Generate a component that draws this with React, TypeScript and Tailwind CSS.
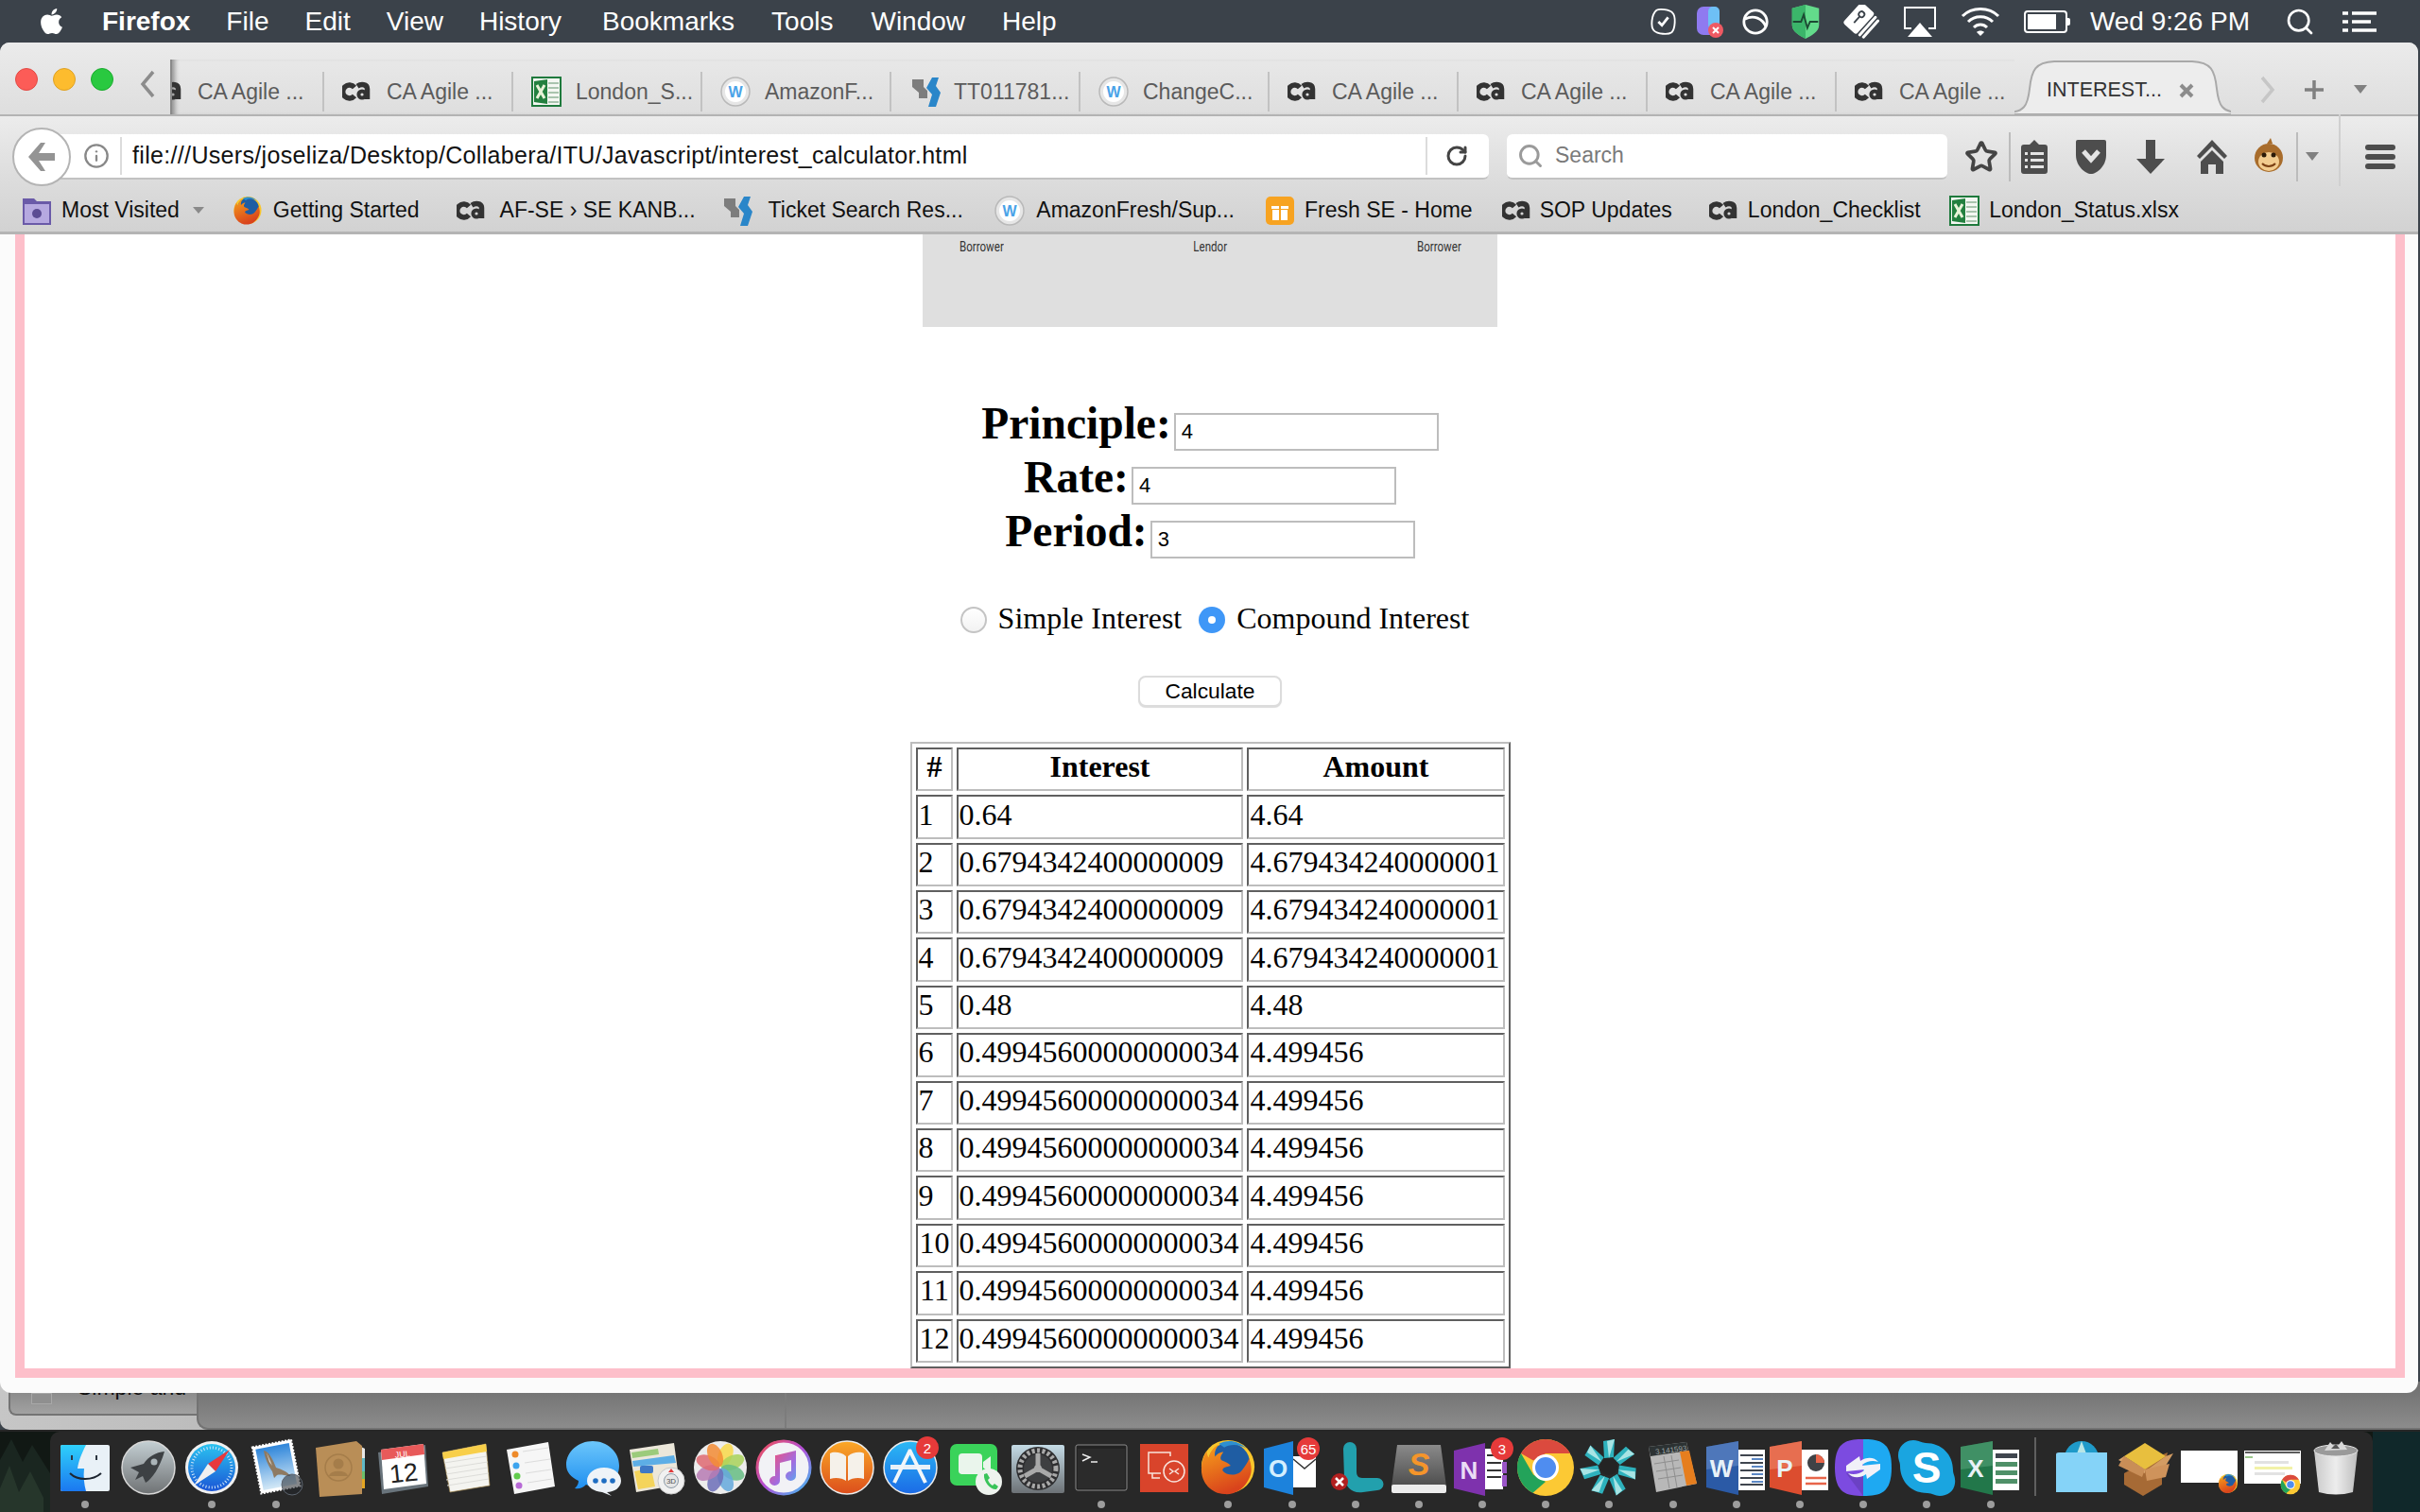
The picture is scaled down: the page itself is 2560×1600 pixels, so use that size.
import { Info, RotateCw, Search, Star } from "lucide-react";
import { FaApple } from "react-icons/fa";

const SERIF = "font-['Liberation_Serif',serif]";

function CaLogo({ className = "" }: { className?: string }) {
  return (
    <svg viewBox="0 0 30 22" className={`w-[30px] h-[22px] ${className}`} fill="none" stroke="#333" strokeWidth="5.5">
      <path d="M13 6.5A7 7 0 1 0 13 15.5" />
      <path d="M16 5.2C20 2.6 26.5 3 26.5 8V19" />
      <circle cx="21" cy="14" r="3.6" strokeWidth="4" />
    </svg>
  );
}

function XlsIcon({ className = "" }: { className?: string }) {
  return (
    <svg viewBox="0 0 32 32" className={`w-[32px] h-[32px] ${className}`}>
      <rect x="1" y="1" width="30" height="30" fill="#f4f7f2" stroke="#1f7a3d" strokeWidth="2" />
      <path d="M18 7h11M18 12h11M18 17h11M18 22h11M18 27h11" stroke="#a9c4ae" strokeWidth="2" />
      <path d="M3 5L17 3V29L3 27Z" fill="#23803f" />
      <path d="M6 9L14 23M14 9L6 23" stroke="#e8f3d8" strokeWidth="3" />
    </svg>
  );
}

function WikiIcon({ className = "" }: { className?: string }) {
  return (
    <svg viewBox="0 0 32 32" className={`w-[32px] h-[32px] ${className}`}>
      <circle cx="16" cy="16" r="15" fill="#e6e6e6" stroke="#b9b9b9" strokeWidth="1.5" />
      <circle cx="16" cy="16" r="11" fill="#fff" />
      <text x="16" y="22" textAnchor="middle" fontFamily="Liberation Sans" fontWeight="700" fontSize="16" fill="#4aa3e8">W</text>
    </svg>
  );
}

function JiraIcon({ className = "" }: { className?: string }) {
  return (
    <svg viewBox="0 0 34 34" className={`w-[34px] h-[34px] ${className}`}>
      <path d="M3 4H15V12L19 16V24H10V18L3 12Z" fill="#7d7d7d" />
      <path d="M24 2L31 2L28 11L33 18L28 33H20L24 20L18 13Z" fill="#2a86c9" />
    </svg>
  );
}

function FoxIcon({ size = 32 }: { size?: number }) {
  return (
    <svg viewBox="0 0 64 64" width={size} height={size} className="overflow-visible">
      <defs>
        <linearGradient id={`fox-o-${size}`} x1="0" y1="0" x2="0.4" y2="1">
          <stop offset="0" stopColor="#f7a21b" />
          <stop offset="1" stopColor="#d9431c" />
        </linearGradient>
      </defs>
      <circle cx="32" cy="31" r="29" fill="#f9c62b" />
      <circle cx="33" cy="28" r="23" fill="#1f5da3" />
      <path d="M22 6C30 1 44 2 52 11C44 6 34 6 28 10Z" fill="#2d8fd0" />
      <path
        d="M22 7C18 12 17 16 18 20C21 16 25 15 27 15C24 19 23 22 25 24C29 26 33 27 35 30C30 32 27 31 26 35C30 41 43 42 48 34C51 30 54 26 55 22C58 30 59 38 54 46C48 57 38 62 28 61C14 60 3 49 3 34C3 26 6 18 9 14C9 18 10 20 11 21C13 14 17 9 22 7Z"
        fill={`url(#fox-o-${size})`}
      />
    </svg>
  );
}

function ChromeIcon({ size = 64 }: { size?: number }) {
  return (
    <svg viewBox="0 0 64 64" width={size} height={size}>
      <circle cx="32" cy="32" r="30" fill="#fcc934" />
      <path d="M32 2A30 30 0 0 1 58 17H32L19 24.5L6 17A30 30 0 0 1 32 2Z" fill="#db4a3e" />
      <path d="M6 17L19 39.5L32 47L18.5 58.8A30 30 0 0 1 6 17Z" fill="#23a35a" />
      <circle cx="32" cy="32" r="14" fill="#fff" />
      <circle cx="32" cy="32" r="11" fill="#4f8df0" />
    </svg>
  );
}

function Badge({ x, y, label, r = 12 }: { x: number; y: number; label: string; r?: number }) {
  return (
    <g>
      <circle cx={x} cy={y} r={r} fill="#e63a3a" />
      <text x={x} y={y + 5.5} textAnchor="middle" fontFamily="Liberation Sans" fontSize="15" fill="#fff">
        {label}
      </text>
    </g>
  );
}

function OfficeIcon({ color, light, letter, kind }: { color: string; light: string; letter: string; kind: "w" | "p" | "x" }) {
  return (
    <svg viewBox="0 0 64 64" width="64" height="64" className="overflow-visible">
      <rect x="34" y="13" width="28" height="43" fill="#fff" />
      {kind === "w" && <path d="M36 19H60M36 27H60M36 35H60M36 43H60M36 50H60" stroke="#40464f" strokeWidth="2" />}
      {kind === "w" && <path d="M48 23H60M48 31H60M48 39H60M48 47H60" stroke="#5b87c5" strokeWidth="2" />}
      {kind === "p" && <circle cx="49" cy="27" r="9" fill="#3f4246" />}
      {kind === "p" && <path d="M49 27V18A9 9 0 0 1 58 27Z" fill="#e8654a" />}
      {kind === "p" && <path d="M38 43H60M38 49H60" stroke="#e8654a" strokeWidth="2.5" />}
      {kind === "x" && <path d="M37 17H60V22H37Z" fill="#40464f" />}
      {kind === "x" && <path d="M37 26H60V31H37ZM37 35H60V40H37ZM37 44H60V49H37Z" fill="#4f9068" />}
      <path d="M0 10L34 4V61L0 53Z" fill={color} />
      <path d="M0 10L34 4V30L0 34Z" fill={light} opacity="0.55" />
      <text x="16" y="42" textAnchor="middle" fontFamily="Liberation Sans" fontWeight="700" fontSize="26" fill="#e9f2f8">
        {letter}
      </text>
    </svg>
  );
}

const dockIcons = [
  <svg key="finder" viewBox="0 0 64 64" width="64" height="64">
    <defs>
      <linearGradient id="finder-l" x1="0" y1="0" x2="0" y2="1">
        <stop offset="0" stopColor="#2fd0fb" />
        <stop offset="1" stopColor="#1b78f0" />
      </linearGradient>
    </defs>
    <rect x="6" y="8" width="52" height="49" rx="2" fill="#e9f1f7" />
    <path d="M8 8H33C28 18 25 25 24 33H31C30 41 31 50 33 57H8A2 2 0 0 1 6 55V10A2 2 0 0 1 8 8Z" fill="url(#finder-l)" />
    <path d="M18 19V24M44 19V24" stroke="#2b3440" strokeWidth="2" />
    <path d="M16 38C24 46 40 46 49 38" stroke="#1d2530" strokeWidth="2" fill="none" />
  </svg>,
  <svg key="launchpad" viewBox="0 0 64 64" width="64" height="64">
    <defs>
      <linearGradient id="lp" x1="0" y1="0" x2="0" y2="1">
        <stop offset="0" stopColor="#c4cfd3" />
        <stop offset="1" stopColor="#6f7274" />
      </linearGradient>
    </defs>
    <circle cx="32" cy="32" r="28" fill="url(#lp)" stroke="#d8d8d8" strokeWidth="1.5" />
    <path d="M49 15C40 16 32 20 27 28L13 32L22 37L18 45L26 41L29 48C36 44 44 32 49 15Z" fill="#3d4144" />
    <circle cx="38" cy="26" r="3.5" fill="#aab4b8" />
  </svg>,
  <svg key="safari" viewBox="0 0 64 64" width="64" height="64">
    <defs>
      <linearGradient id="saf" x1="0" y1="0" x2="0" y2="1">
        <stop offset="0" stopColor="#2bc3f0" />
        <stop offset="1" stopColor="#1a55d6" />
      </linearGradient>
    </defs>
    <circle cx="32" cy="32" r="28" fill="#f0f0f0" />
    <circle cx="32" cy="32" r="25" fill="url(#saf)" />
    <circle cx="32" cy="32" r="21" fill="none" stroke="#cfe6f8" strokeWidth="3" strokeDasharray="1 2.2" />
    <path d="M51 13L36 36L28 28Z" fill="#e8383d" />
    <path d="M13 51L36 36L28 28Z" fill="#f0f0f0" />
  </svg>,
  <svg key="mail" viewBox="0 0 64 64" width="64" height="64">
    <defs>
      <linearGradient id="mail-s" x1="0" y1="0" x2="0" y2="1">
        <stop offset="0" stopColor="#2f86da" />
        <stop offset="1" stopColor="#d3e8f6" />
      </linearGradient>
    </defs>
    <g transform="rotate(-11 32 30)">
      <rect x="11" y="6" width="42" height="50" fill="#fff" stroke="#fff" strokeWidth="2" strokeDasharray="2 1.5" />
      <rect x="14" y="9" width="36" height="44" fill="url(#mail-s)" />
    </g>
    <path d="M19 14C24 14 29 24 32 32C38 34 44 36 47 41C40 40 36 39 33 40L30 43L28 36C24 30 20 22 19 14Z" fill="#8e7a62" />
    <path d="M22 16L28 30L25 26Z" fill="#e4ddd2" />
    <circle cx="49" cy="50" r="11" fill="#20242a" fillOpacity="0.55" stroke="#5d6570" />
  </svg>,
  <svg key="contacts" viewBox="0 0 64 64" width="64" height="64">
    <path d="M55 10L59 12V50L56 51Z" fill="#e8e8e8" />
    <path d="M54 22H59V36H54Z" fill="#5fb9c6" />
    <path d="M54 36H59V44H54Z" fill="#6cc06b" />
    <path d="M54 44H59V54H54Z" fill="#e3a522" />
    <path d="M7 11L50 4L56 9V60L11 63Z" fill="#b98e57" />
    <circle cx="31" cy="32" r="14" fill="none" stroke="#a57d4a" strokeWidth="1.5" />
    <circle cx="31" cy="28" r="5.5" fill="#a57d4a" />
    <path d="M21 41C22 34 40 34 41 41Z" fill="#a57d4a" />
  </svg>,
  <svg key="calendar" viewBox="0 0 64 64" width="64" height="64">
    <path d="M6 16L56 8L59 52L10 60Z" fill="#69747c" />
    <path d="M9 13L54 7L57 49L12 55Z" fill="#fff" />
    <path d="M9 13L54 7L55 18L10 24Z" fill="#e85a5a" />
    <text x="32" y="21" textAnchor="middle" fontFamily="Liberation Sans" fontSize="9" fill="#fff" transform="rotate(-6 32 21)">
      JUL
    </text>
    <text x="34" y="47" textAnchor="middle" fontFamily="Liberation Sans" fontSize="27" fill="#222" transform="rotate(-6 34 47)">
      12
    </text>
  </svg>,
  <svg key="notes" viewBox="0 0 64 64" width="64" height="64">
    <path d="M7 16L53 7L57 51L15 58Z" fill="#f4f4f0" stroke="#a58a50" strokeWidth="0.7" />
    <path d="M7 16L53 7L54 15L8 23Z" fill="#f8cf4a" />
    <path d="M9 27L54 20M10 33L55 26M11 39L55 32M11 45L56 38M12 51L56 44" stroke="#dcdcd8" strokeWidth="1" />
  </svg>,
  <svg key="reminders" viewBox="0 0 64 64" width="64" height="64">
    <path d="M8 13L52 5L59 52L16 60Z" fill="#f6f6f6" />
    <circle cx="17" cy="18" r="3.5" fill="#ee8a2a" />
    <circle cx="18" cy="30" r="3.5" fill="#3da4ee" />
    <circle cx="19" cy="41" r="3.5" fill="#63cc4d" />
    <circle cx="21" cy="51" r="3.5" fill="#b86ad6" />
    <path d="M25 15L52 11M27 27L54 23M28 38L55 34M30 48L56 44" stroke="#dcdcdc" />
  </svg>,
  <svg key="messages" viewBox="0 0 64 64" width="64" height="64">
    <defs>
      <linearGradient id="msg" x1="0" y1="0" x2="0" y2="1">
        <stop offset="0" stopColor="#6cc7fb" />
        <stop offset="1" stopColor="#1f8ff0" />
      </linearGradient>
    </defs>
    <path d="M32 4C47 4 60 15 60 30C60 44 48 52 34 52C30 52 27 51 25 50C21 54 17 55 13 54C16 51 17 49 17 46C9 42 4 37 4 29C4 15 17 4 32 4Z" fill="url(#msg)" />
    <path d="M44 32C54 32 62 38 62 46C62 53 55 58 47 58L52 62L42 58C33 57 26 53 26 46C26 38 34 32 44 32Z" fill="#eef3f8" />
    <circle cx="35" cy="46" r="2.8" fill="#1e6dc2" />
    <circle cx="44" cy="46" r="2.8" fill="#1e6dc2" />
    <circle cx="53" cy="46" r="2.8" fill="#1e6dc2" />
  </svg>,
  <svg key="maps" viewBox="0 0 64 64" width="64" height="64">
    <path d="M3 13L50 6L56 50L10 58Z" fill="#ece7da" />
    <path d="M5 16L33 12L34 18L6 22Z" fill="#9ccb7b" />
    <path d="M6 25L50 19L52 27L7 31Z" fill="#5daee6" />
    <path d="M8 36C16 34 22 34 27 38L30 52L12 55Z" fill="#f4d45b" />
    <rect x="14" y="30" width="14" height="8" rx="2" fill="#3f79c6" />
    <circle cx="47" cy="46" r="14" fill="#f1f1f1" stroke="#c8c8c8" />
    <circle cx="47" cy="46" r="7.5" fill="#e6e6e6" stroke="#8c9aa6" />
    <text x="47" y="49" textAnchor="middle" fontFamily="Liberation Sans" fontSize="8" fill="#555">
      3D
    </text>
    <path d="M47 33L50 37H44Z" fill="#e03b3b" />
  </svg>,
  <svg key="photos" viewBox="0 0 64 64" width="64" height="64">
    <circle cx="32" cy="32" r="28" fill="#ececec" />
    {[
      ["#f9d94a", 0],
      ["#a9d25a", 45],
      ["#66bd84", 90],
      ["#65a9dd", 135],
      ["#6c6fb8", 180],
      ["#b77bb4", 225],
      ["#df6a72", 270],
      ["#f38c35", 315],
    ].map(([fill, angle]) => (
      <ellipse key={angle as number} cx="32" cy="18" rx="7.5" ry="13" fill={fill as string} fillOpacity="0.85" transform={`rotate(${(angle as number) + 22} 32 32)`} />
    ))}
  </svg>,
  <svg key="itunes" viewBox="0 0 64 64" width="64" height="64">
    <defs>
      <linearGradient id="it-r" x1="0" y1="0" x2="1" y2="1">
        <stop offset="0" stopColor="#f2504f" />
        <stop offset="0.5" stopColor="#b24fd8" />
        <stop offset="1" stopColor="#3cc4f2" />
      </linearGradient>
      <linearGradient id="it-n" x1="0" y1="0" x2="1" y2="1">
        <stop offset="0" stopColor="#f74e6f" />
        <stop offset="0.6" stopColor="#a36be0" />
        <stop offset="1" stopColor="#53aef0" />
      </linearGradient>
    </defs>
    <circle cx="32" cy="32" r="28" fill="#f2f2f6" stroke="url(#it-r)" strokeWidth="3" />
    <path d="M24 19L45 14V41A5.5 5 0 1 1 40 36V24L28 27V46A5.5 5 0 1 1 23 41V19Z" fill="url(#it-n)" />
  </svg>,
  <svg key="ibooks" viewBox="0 0 64 64" width="64" height="64">
    <defs>
      <linearGradient id="ib" x1="0" y1="0" x2="0" y2="1">
        <stop offset="0" stopColor="#faa827" />
        <stop offset="1" stopColor="#dc4e1c" />
      </linearGradient>
    </defs>
    <circle cx="32" cy="32" r="28" fill="url(#ib)" stroke="#ececec" strokeWidth="1.5" />
    <path d="M31 20C26 15 17 15 14 17V44C20 42 27 43 31 46ZM33 20C38 15 47 15 50 17V44C44 42 37 43 33 46Z" fill="#f5f1ea" />
  </svg>,
  <svg key="appstore" viewBox="0 0 64 64" width="64" height="64" className="overflow-visible">
    <defs>
      <linearGradient id="as" x1="0" y1="0" x2="0" y2="1">
        <stop offset="0" stopColor="#2bb9f5" />
        <stop offset="1" stopColor="#1b6ae6" />
      </linearGradient>
    </defs>
    <circle cx="32" cy="32" r="28" fill="url(#as)" stroke="#ececec" strokeWidth="1.5" />
    <path d="M11 29H53V34H11Z" fill="#e8f0f8" />
    <path d="M32 13L15 48M31 13L48 48" stroke="#f1f6fa" strokeWidth="4" fill="none" />
    <Badge x={50} y={11} label="2" />
  </svg>,
  <svg key="facetime" viewBox="0 0 64 64" width="64" height="64">
    <rect x="6" y="7" width="50" height="44" rx="7" fill="#3ad35a" />
    <rect x="15" y="17" width="25" height="22" rx="4" fill="#eaf5ec" />
    <path d="M41 26L49 20V38L41 32Z" fill="#eaf5ec" />
    <circle cx="47" cy="47" r="14" fill="#eef3ee" />
    <path d="M42 39L45 38L48 43L46 45C47 48 49 50 51 51L53 49L57 52L55 55C50 56 41 48 42 39Z" fill="#3ac45a" />
  </svg>,
  <svg key="sysprefs" viewBox="0 0 64 64" width="64" height="64">
    <defs>
      <linearGradient id="sp" x1="0" y1="0" x2="0" y2="1">
        <stop offset="0" stopColor="#c4dbe6" />
        <stop offset="1" stopColor="#6d7276" />
      </linearGradient>
    </defs>
    <rect x="4" y="8" width="56" height="51" rx="2" fill="url(#sp)" />
    <circle cx="32" cy="33" r="23" fill="#2e2e30" />
    <circle cx="32" cy="33" r="19" fill="none" stroke="#a9a9a9" strokeWidth="5" strokeDasharray="3 2.5" />
    <circle cx="32" cy="33" r="15" fill="#3e3f41" />
    <path d="M32 33L32 17M32 33L46 41M32 33L18 41" stroke="#a9a9a9" strokeWidth="5" />
    <circle cx="32" cy="33" r="4" fill="#a9a9a9" />
  </svg>,
  <svg key="terminal" viewBox="0 0 64 64" width="64" height="64">
    <rect x="5" y="8" width="54" height="48" rx="2" fill="#222" stroke="#8a8a8a" strokeWidth="1" />
    <rect x="7" y="12" width="50" height="42" fill="#2b2b2b" />
    <path d="M12 18L20 21L12 25" stroke="#eee" strokeWidth="1.5" fill="none" />
    <path d="M21 26H28" stroke="#eee" strokeWidth="1.5" />
  </svg>,
  <svg key="remote" viewBox="0 0 64 64" width="64" height="64">
    <rect x="6" y="7" width="51" height="51" fill="#d9442b" />
    <path d="M38 20V16H15V38H28M19 38V43H27" stroke="#f8e3dc" strokeWidth="1.5" fill="none" />
    <circle cx="42" cy="36" r="11" fill="#d9442b" stroke="#f8e3dc" strokeWidth="1.5" />
    <path d="M37 33L41 36L37 39M47 33L43 36L47 39" stroke="#f8e3dc" strokeWidth="1.5" fill="none" />
  </svg>,
  <div key="firefox" className="flex h-[64px] w-[64px] items-center justify-center">
    <FoxIcon size={62} />
  </div>,
  <svg key="outlook" viewBox="0 0 64 64" width="64" height="64" className="overflow-visible">
    <rect x="33" y="20" width="24" height="33" fill="#fff" />
    <path d="M33 23L45 33L57 23" fill="none" stroke="#333" strokeWidth="1.5" />
    <path d="M2 12L33 4V61L2 53Z" fill="#1c82dc" />
    <text x="17" y="42" textAnchor="middle" fontFamily="Liberation Sans" fontWeight="700" fontSize="26" fill="#d4efff">
      O
    </text>
    <Badge x={49} y={12} label="65" />
  </svg>,
  <svg key="lync" viewBox="0 0 64 64" width="64" height="64">
    <path d="M19 12A7 7 0 0 1 33 12V36C33 44 38 43 44 43H55A6 6 0 0 1 55 56L40 58C28 60 21 52 20 42Z" fill="#22a0ad" />
    <circle cx="15" cy="47" r="9" fill="#b21f1f" />
    <path d="M11 43L19 51M19 43L11 51" stroke="#fff" strokeWidth="2.5" />
  </svg>,
  <svg key="sublime" viewBox="0 0 64 64" width="64" height="64">
    <defs>
      <linearGradient id="sub" x1="0" y1="0" x2="0" y2="1">
        <stop offset="0" stopColor="#8a8a8a" />
        <stop offset="1" stopColor="#4d4d4d" />
      </linearGradient>
    </defs>
    <path d="M9 8H55L61 52H3Z" fill="url(#sub)" />
    <rect x="3" y="50" width="58" height="9" rx="2" fill="#ececec" />
    <text x="32" y="40" textAnchor="middle" fontFamily="Liberation Sans" fontWeight="700" fontStyle="italic" fontSize="34" fill="#f5952a">
      S
    </text>
  </svg>,
  <svg key="onenote" viewBox="0 0 64 64" width="64" height="64" className="overflow-visible">
    <rect x="32" y="12" width="22" height="43" fill="#fff" />
    <path d="M37 19H52M37 27H52M37 35H52M37 42H52" stroke="#333" strokeWidth="2" />
    <rect x="53" y="26" width="5" height="12" fill="#9a55c8" />
    <rect x="53" y="40" width="5" height="12" fill="#9a55c8" />
    <path d="M2 14L35 6V62L2 54Z" fill="#7e32ad" />
    <text x="18" y="44" textAnchor="middle" fontFamily="Liberation Sans" fontWeight="700" fontSize="26" fill="#ebdcf5">
      N
    </text>
    <Badge x={53} y={12} label="3" />
  </svg>,
  <ChromeIcon key="chrome" />,
  <svg key="spoke" viewBox="0 0 64 64" width="64" height="64">
    {[0, 51, 103, 154, 206, 257, 309].map((a) => (
      <g key={a} transform={`rotate(${a} 32 32)`}>
        <path d="M27 22L26 4L38 2L37 21Z" fill="#2eb2bd" />
        <path d="M32 22L30 4L38 2Z" fill="#a8e4e4" />
      </g>
    ))}
    <circle cx="32" cy="31" r="9" fill="#242424" />
  </svg>,
  <svg key="calculator" viewBox="0 0 64 64" width="64" height="64">
    <path d="M6 10L46 5L57 49L14 58Z" fill="#b8b8b8" />
    <path d="M6 10L46 5L48 14L8 20Z" fill="#2c3233" />
    <path d="M39 15L49 14L57 49L46 51Z" fill="#e67e1e" />
    <text x="30" y="16" textAnchor="middle" fontFamily="Liberation Sans" fontSize="8" fill="#9ca5a5" transform="rotate(-7 30 16)">
      3.141593
    </text>
    <path d="M12 28L38 24M14 36L40 32M16 44L42 40M22 20L28 54M30 19L36 53" stroke="#8f8f8f" />
  </svg>,
  <OfficeIcon key="word" color="#2b5aa6" light="#6c90cb" letter="W" kind="w" />,
  <OfficeIcon key="ppt" color="#dc4d2f" light="#f08a6b" letter="P" kind="p" />,
  <svg key="sync" viewBox="0 0 64 64" width="64" height="64" className="overflow-visible">
    <path d="M32 2C14 2 2 5 2 32C2 59 14 62 32 62Z" fill="#7c4be0" />
    <path d="M32 2C50 2 62 5 62 32C62 59 50 62 32 62Z" fill="#1ea9f2" />
    <path d="M14 38L32 62L32 40Z" fill="#5a37a8" fillOpacity="0.5" />
    <path d="M14 30L28 20L29 25C36 20 44 21 48 26C42 24 36 25 31 29L34 34L14 36Z" fill="#f1f1f8" />
    <path d="M50 34L36 44L35 39C28 44 20 43 16 38C22 40 28 39 33 35L30 30L50 28Z" fill="#f1f1f8" />
  </svg>,
  <svg key="skype" viewBox="0 0 64 64" width="64" height="64">
    <path d="M18 3C24 3 27 6 31 6C48 6 60 18 60 35C60 39 63 42 62 49C61 57 54 62 46 62C41 62 38 59 33 59C15 59 4 46 4 30C4 26 2 24 2 19C2 10 9 3 18 3Z" fill="#1aa5e0" />
    <text x="32" y="48" textAnchor="middle" fontFamily="Liberation Sans" fontWeight="700" fontSize="46" fill="#fff">
      S
    </text>
  </svg>,
  <OfficeIcon key="excel" color="#22774a" light="#5aa67b" letter="X" kind="x" />,
];

function DockTail() {
  return (
    <>
      <div className="w-[13px] shrink-0" />
      <div className="mt-[6px] h-[62px] w-[2px] shrink-0 bg-[#5f5f5f]" />
      <div className="ml-[14.4px] flex w-[66px] shrink-0 justify-center pt-[6px]">
        <svg viewBox="0 0 64 64" width="64" height="64">
          <circle cx="32" cy="22" r="18" fill="#1f9ac9" />
          <path d="M32 4L26 20H38Z" fill="#b9e6e6" />
          <path d="M5 18Q5 16 8 16H59V58H5Z" fill="#85d3f8" />
        </svg>
      </div>
      <div className="flex w-[68px] shrink-0 justify-center pt-[6px]">
        <svg viewBox="0 0 64 64" width="64" height="64">
          <path d="M32 26L56 16L50 40V50L30 62L10 50V38Z" fill="#a66a35" />
          <path d="M10 20L32 6L54 20L32 34Z" fill="#e8bf3e" />
          <path d="M10 20L32 34V38L4 24Z" fill="#d9a66f" />
          <path d="M54 20L62 17L54 30L32 36Z" fill="#d39c63" />
          <path d="M4 30L29 42L32 34L10 20Z" fill="#c98e57" />
          <path d="M32 34L58 28L54 42L34 46Z" fill="#cf935b" />
        </svg>
      </div>
      <div className="flex w-[68px] shrink-0 justify-center pt-[6px]">
        <div className="relative mt-[14px] h-[34px] w-[60px] bg-white">
          <div className="absolute -bottom-[12px] -right-[1px]">
            <FoxIcon size={22} />
          </div>
        </div>
      </div>
      <div className="flex w-[66px] shrink-0 justify-center pt-[6px]">
        <div className="relative mt-[14px] flex h-[35px] w-[60px] flex-col gap-[3px] bg-white p-[1px]">
          <div className="h-[2px] bg-[#5c5c5c]" />
          <div className="h-[2px] w-[8px] bg-[#9cc98c]" />
          <div className="ml-[10px] h-[3px] w-[36px] bg-[#e2e2e2]" />
          <div className="ml-[10px] h-[3px] w-[40px] bg-[#f2f2a8]" />
          <div className="ml-[10px] h-[3px] w-[32px] bg-[#e2e2e2]" />
          <div className="absolute -bottom-[12px] right-0">
            <ChromeIcon size={22} />
          </div>
        </div>
      </div>
      <div className="flex w-[68px] shrink-0 justify-center pt-[6px]">
        <svg viewBox="0 0 64 64" width="64" height="64">
          <defs>
            <linearGradient id="trash" x1="0" y1="0" x2="1" y2="0">
              <stop offset="0" stopColor="#c9c9c9" />
              <stop offset="0.5" stopColor="#ededed" />
              <stop offset="1" stopColor="#bdbdbd" />
            </linearGradient>
          </defs>
          <path d="M9 14H55L50 58Q32 63 14 58Z" fill="url(#trash)" />
          <ellipse cx="32" cy="14" rx="23" ry="6" fill="#9a9a9a" stroke="#e6e6e6" />
          <path d="M20 14L26 5L32 12L38 4L44 13Z" fill="#d8d8d8" />
          <path d="M27 12L32 7L36 12" fill="#555" />
        </svg>
      </div>
    </>
  );
}

const dotted = [0, 2, 3, 16, 18, 19, 20, 21, 22, 23, 24, 25, 26, 27, 28, 29, 30];

function Dock() {
  return (
    <div className="flex h-[85px] w-full bg-[#111814]">
      <svg viewBox="0 0 53 85" className="h-[85px] w-[53px] shrink-0">
        <path d="M0 30L12 8L24 32L34 14L53 44V85H0Z" fill="#1a2620" />
        <path d="M0 60L10 36L20 64L32 42L46 70V85H0Z" fill="#26362b" />
      </svg>
      <div className="flex h-[85px] w-[2457px] rounded-t-[10px] bg-[#282828] pl-[3.4px]">
        {dockIcons.map((icon, i) => (
          <div key={i} className="flex w-[67.2px] shrink-0 flex-col items-center pt-[6px]">
            {icon}
            <div className={`mt-[3px] h-[8px] w-[8px] rounded-full ${dotted.includes(i) ? "bg-[#9d9d9d]" : "bg-transparent"}`} />
          </div>
        ))}
        <DockTail />
      </div>
      <div className="flex-1 bg-[#10282a]" />
    </div>
  );
}

function MenuBar() {
  return (
    <div className="flex h-[45px] items-center bg-[#3b424a] text-[28px] text-white">
      <FaApple className="ml-[41px] mr-[40px] h-[31px] w-[27px] shrink-0" />
      <div className="flex items-center gap-[38px]">
        <span className="font-bold">Firefox</span>
        <span>File</span>
        <span>Edit</span>
        <span>View</span>
        <span>History</span>
        <span className="ml-[5px]">Bookmarks</span>
        <span className="ml-[1px]">Tools</span>
        <span className="ml-[2px]">Window</span>
        <span className="ml-[1px]">Help</span>
      </div>
      <div className="ml-auto flex items-center">
        <svg viewBox="0 0 32 32" className="-ml-[3px] h-[30px] w-[30px]" fill="none" stroke="#fff" strokeWidth="2">
          <path d="M9 3C12 1 24 2 27 6C31 10 30 24 26 28C22 31 10 30 6 26C2 22 3 8 9 3Z" />
          <path d="M11 16L15 20L22 11" strokeWidth="3" />
        </svg>
        <svg viewBox="0 0 32 36" className="ml-[18px] h-[36px] w-[32px]">
          <rect x="3" y="2" width="24" height="30" rx="7" fill="#8f7af0" />
          <rect x="15" y="2" width="12" height="24" rx="5" fill="#6ec0f5" />
          <circle cx="23" cy="27" r="8" fill="#ef5a63" />
          <path d="M20 24L26 30M26 24L20 30" stroke="#fff" strokeWidth="2" />
        </svg>
        <svg viewBox="0 0 32 32" className="ml-[18px] h-[30px] w-[30px]" fill="none" stroke="#fff" strokeWidth="3">
          <circle cx="16" cy="16" r="13" />
          <path d="M4 13C14 8 24 12 28 22" />
        </svg>
        <svg viewBox="0 0 32 40" className="ml-[22px] h-[38px] w-[32px]">
          <path d="M16 1L31 5V24C31 31 22 36 16 39C10 36 1 31 1 24V5Z" fill="#63db8b" />
          <path d="M16 1V39C10 36 1 31 1 24V5Z" fill="#3bb56a" />
          <path d="M2 20H11L14 12L18 27L21 20H30" stroke="#1c4a33" strokeWidth="2" fill="none" />
        </svg>
        <svg viewBox="0 0 38 36" className="ml-[24px] h-[36px] w-[38px]">
          <g transform="rotate(42 19 18)">
            <rect x="5" y="2" width="19" height="30" rx="3" fill="#fff" />
            <rect x="25.5" y="3" width="3" height="28" rx="1.5" fill="#fff" />
            <rect x="30" y="4" width="3" height="26" rx="1.5" fill="#fff" />
            <circle cx="14" cy="12" r="3" fill="none" stroke="#3b424a" strokeWidth="1.8" />
            <path d="M14 15V24" stroke="#3b424a" strokeWidth="1.8" />
          </g>
        </svg>
        <svg viewBox="0 0 36 34" className="ml-[25px] h-[34px] w-[36px]" fill="none" stroke="#fff" strokeWidth="2">
          <path d="M9 24H2V2H34V24H27" />
          <path d="M18 18L31 33H5Z" fill="#fff" stroke="none" />
        </svg>
        <svg viewBox="0 0 42 34" className="ml-[25px] h-[34px] w-[42px]" fill="none" stroke="#fff" strokeWidth="3">
          <path d="M2 11C12 1 30 1 40 11" />
          <path d="M8 17C15 10 27 10 34 17" />
          <path d="M14 23C18 19 24 19 28 23" />
          <path d="M21 32L17 28C19 26 23 26 25 28Z" fill="#fff" stroke="none" />
        </svg>
        <div className="ml-[25px] flex h-[24px] w-[46px] items-center rounded-[4px] border-2 border-white p-[2px]">
          <div className="h-full w-[30px] bg-white" />
        </div>
        <div className="h-[8px] w-[3px] rounded-r-[2px] bg-white" />
        <span className="ml-[21px]">Wed 9:26 PM</span>
        <Search className="ml-[37px] h-[32px] w-[32px]" strokeWidth={2} />
        <svg viewBox="0 0 36 24" className="ml-[29px] h-[24px] w-[36px]" stroke="#fff" strokeWidth="3.5">
          <path d="M0 3H6M10 3H36M0 12H6M10 12H30M0 21H6M10 21H36" />
        </svg>
      </div>
      <div className="w-[46px] shrink-0" />
    </div>
  );
}

function Tab({ icon, label, clip = false, w = "w-[200px]", sep = true }: { icon: React.ReactNode; label: string; clip?: boolean; w?: string; sep?: boolean }) {
  return (
    <div className={`flex h-[42px] shrink-0 items-center whitespace-nowrap pl-[19px] ${w} ${clip ? "-ml-[39px]" : ""} ${sep ? "border-r-2 border-[#c2c2c2]" : ""}`}>
      <div className="flex w-[47px] shrink-0 items-center">{icon}</div>
      <span className="text-[23px] text-[#5b5b5b]">{label}</span>
    </div>
  );
}

function TabBar() {
  return (
    <div className="flex h-[78px] items-end border-b-2 border-[#b3b3b3] bg-gradient-to-b from-[#ebebeb] to-[#dedede]">
      <div className="z-10 flex h-full w-[180px] shrink-0 items-start pl-[16px] pt-[27px]">
        <div className="h-[24px] w-[24px] rounded-full border border-[#e24a44] bg-[#fc5c57]" />
        <div className="ml-[16px] h-[24px] w-[24px] rounded-full border border-[#dea123] bg-[#fdbc2e]" />
        <div className="ml-[16px] h-[24px] w-[24px] rounded-full border border-[#1aab2e] bg-[#29c940]" />
        <svg viewBox="0 0 18 30" className="ml-[27px] mt-[2px] h-[30px] w-[18px]" fill="none" stroke="#8c8c8c" strokeWidth="3.5">
          <path d="M15 2L4 15L15 28" />
        </svg>
      </div>
      <div className="flex h-[58px] w-[1951px] shrink-0 items-center overflow-hidden border-l-2 border-[#8a8a8a] pt-[10px] shadow-[inset_6px_0_5px_-3px_rgba(0,0,0,0.35)]">
        <Tab clip icon={<CaLogo />} label="CA Agile ..." />
        <Tab icon={<CaLogo />} label="CA Agile ..." />
        <Tab icon={<XlsIcon />} label="London_S..." />
        <Tab icon={<WikiIcon />} label="AmazonF..." />
        <Tab icon={<JiraIcon />} label="TT011781..." />
        <Tab icon={<WikiIcon />} label="ChangeC..." />
        <Tab icon={<CaLogo />} label="CA Agile ..." />
        <Tab icon={<CaLogo />} label="CA Agile ..." />
        <Tab icon={<CaLogo />} label="CA Agile ..." />
        <Tab icon={<CaLogo />} label="CA Agile ..." w="w-[188px]" sep={false} />
      </div>
      <div className="relative flex h-[57px] w-[229px] shrink-0 items-center pt-[6px]">
        <svg viewBox="0 0 229 57" className="absolute inset-0 h-[57px] w-[229px]">
          <path d="M-8 55C10 55 14 48 16 30C18 10 22 2 42 1H188C208 2 212 10 214 30C216 48 220 55 238 55V57H-8Z" fill="#ededed" stroke="#a9a9a9" strokeWidth="2" />
        </svg>
        <span className="relative ml-[34px] text-[21.5px] text-[#333]">INTEREST...</span>
        <svg viewBox="0 0 16 16" className="relative ml-[18px] h-[16px] w-[16px]" stroke="#8c8c8c" strokeWidth="4">
          <path d="M2 2L14 14M14 2L2 14" />
        </svg>
      </div>
      <div className="flex h-full flex-1 items-start pt-[35px]">
        <svg viewBox="0 0 18 30" className="ml-[30px] h-[30px] w-[18px]" fill="none" stroke="#c6c6c6" strokeWidth="3.5">
          <path d="M3 2L14 15L3 28" />
        </svg>
        <svg viewBox="0 0 24 24" className="ml-[28px] mt-[3px] h-[24px] w-[24px]" stroke="#808080" strokeWidth="3.5">
          <path d="M12 2V22M2 12H22" />
        </svg>
        <div className="ml-[30px] mt-[10px] h-0 w-0 border-x-[7px] border-t-[9px] border-x-transparent border-t-[#808080]" />
      </div>
    </div>
  );
}

function NavBar() {
  return (
    <div className="flex h-[69px] items-center bg-gradient-to-b from-[#ececec] to-[#dcdcdc] pl-[13px] pt-[16px]">
      <div className="z-10 flex h-[62px] w-[62px] shrink-0 items-center justify-center rounded-full border-2 border-[#b4b4b4] bg-white">
        <svg viewBox="0 0 32 30" className="h-[30px] w-[32px]" fill="#949494">
          <path d="M15 0L20 0L13 11H30V19H13L20 30H15L2 15Z" />
        </svg>
      </div>
      <div className="-ml-[15px] flex h-[48px] w-[1515px] shrink-0 items-center rounded-r-[6px] border-b-2 border-[#c2c2c2] bg-white pl-[28px]">
        <Info className="h-[28px] w-[28px] text-[#888]" strokeWidth={2} />
        <div className="ml-[11px] h-[40px] w-[2px] bg-[#dcdcdc]" />
        <span className="ml-[11px] w-[1368px] shrink-0 whitespace-nowrap text-[25px] tracking-[0.33px] text-[#111]">file:///Users/joseliza/Desktop/Collabera/ITU/Javascript/interest_calculator.html</span>
        <div className="h-[40px] w-[2px] bg-[#dcdcdc]" />
        <RotateCw className="ml-[19px] h-[24px] w-[24px] text-[#444]" strokeWidth={3} />
      </div>
      <div className="ml-[19px] flex h-[48px] w-[466px] shrink-0 items-center rounded-[6px] border-b-2 border-[#c2c2c2] bg-white pl-[11px]">
        <Search className="h-[28px] w-[28px] text-[#9a9a9a]" strokeWidth={2.5} />
        <span className="ml-[12px] text-[23px] text-[#7a7a7a]">Search</span>
      </div>
      <Star className="ml-[18px] h-[36px] w-[36px] text-[#444]" strokeWidth={2.5} />
      <div className="ml-[11px] h-[52px] w-[2px] bg-[#bcbcbc]" />
      <svg viewBox="0 0 28 36" className="ml-[11px] h-[36px] w-[28px]" fill="#4d4d4d">
        <path d="M14 0L19 5H25A3 3 0 0 1 28 8V33A3 3 0 0 1 25 36H3A3 3 0 0 1 0 33V8A3 3 0 0 1 3 5H9Z" />
        <path d="M4 13H7V16H4ZM10 13H24V16H10ZM4 20H7V23H4ZM10 20H24V23H10ZM4 27H7V30H4ZM10 27H24V30H10Z" fill="#e4e4e4" />
      </svg>
      <svg viewBox="0 0 32 36" className="ml-[30px] h-[36px] w-[32px]">
        <path d="M2 0H30A2 2 0 0 1 32 2V16C32 28 22 36 16 36C10 36 0 28 0 16V2A2 2 0 0 1 2 0Z" fill="#4d4d4d" />
        <path d="M8 12L16 21L24 12" stroke="#e4e4e4" strokeWidth="5" fill="none" />
      </svg>
      <svg viewBox="0 0 30 36" className="ml-[32px] h-[36px] w-[30px]" fill="#4d4d4d">
        <path d="M10 0H20V20H30L15 36L0 20H10Z" />
      </svg>
      <svg viewBox="0 0 32 36" className="ml-[34px] h-[36px] w-[32px]" fill="#4d4d4d">
        <path d="M16 0L32 17L29 20L16 7L3 20L0 17Z" />
        <path d="M16 11L28 23V36H20V26H12V36H4V23Z" />
      </svg>
      <svg viewBox="0 0 32 40" className="ml-[28px] h-[40px] w-[32px]">
        <circle cx="16" cy="21" r="15" fill="#a86c2b" />
        <ellipse cx="16" cy="25" rx="11" ry="10" fill="#f2cc8f" />
        <circle cx="11" cy="18" r="2.5" fill="#2b1a08" />
        <circle cx="21" cy="18" r="2.5" fill="#2b1a08" />
        <path d="M9 27C13 31 19 31 23 27" stroke="#7a3f12" strokeWidth="2" fill="none" />
        <path d="M14 6L18 0L20 6Z" fill="#a86c2b" />
      </svg>
      <div className="ml-[13px] h-[52px] w-[2px] bg-[#bcbcbc]" />
      <div className="ml-[8px] h-0 w-0 border-x-[7px] border-t-[9px] border-x-transparent border-t-[#808080]" />
      <div className="ml-[21px] -mt-[14px] h-[76px] w-[2px] bg-[#d0d0d0]" />
      <div className="ml-[26px] flex w-[32px] flex-col gap-[4px]">
        <div className="h-[6px] rounded-[3px] bg-[#4d4d4d]" />
        <div className="h-[6px] rounded-[3px] bg-[#4d4d4d]" />
        <div className="h-[6px] rounded-[3px] bg-[#4d4d4d]" />
      </div>
    </div>
  );
}

function BookmarksBar() {
  return (
    <div className="flex h-[56px] items-center whitespace-nowrap border-b-[3px] border-[#b4b4b4] bg-gradient-to-b from-[#dcdcdc] to-[#d2d2d2] pl-[23px] pt-[8px] text-[23px] text-[#111]">
      <svg viewBox="0 0 32 32" className="h-[32px] w-[32px]">
        <path d="M1 3H13L16 6H31V31H1Z" fill="#6a5aa8" />
        <rect x="3" y="9" width="26" height="20" fill="#b6a9e0" />
        <circle cx="16" cy="19" r="5" fill="#5b4c93" />
      </svg>
      <span className="ml-[10px]">Most Visited</span>
      <div className="ml-[14px] h-0 w-0 border-x-[6px] border-t-[7px] border-x-transparent border-t-[#8a8a8a]" />
      <div className="ml-[30px] flex items-center">
        <FoxIcon size={32} />
      </div>
      <span className="ml-[11px]">Getting Started</span>
      <CaLogo className="ml-[39px]" />
      <span className="ml-[16px]">AF-SE › SE KANB...</span>
      <JiraIcon className="ml-[27px]" />
      <span className="ml-[16px]">Ticket Search Res...</span>
      <WikiIcon className="ml-[33.5px]" />
      <span className="ml-[12px]">AmazonFresh/Sup...</span>
      <svg viewBox="0 0 30 30" className="ml-[33px] h-[30px] w-[30px]">
        <rect width="30" height="30" rx="5" fill="#f7a321" />
        <path d="M7 14H23V25H7ZM6 10H24V13H6Z" fill="#fff" />
        <path d="M15 10V25" stroke="#f7a321" strokeWidth="2" />
      </svg>
      <span className="ml-[11px]">Fresh SE - Home</span>
      <CaLogo className="ml-[31px]" />
      <span className="ml-[10px]">SOP Updates</span>
      <CaLogo className="ml-[39px]" />
      <span className="ml-[11px]">London_Checklist</span>
      <XlsIcon className="ml-[30px]" />
      <span className="ml-[10.5px]">London_Status.xlsx</span>
    </div>
  );
}

const rows: [string, string, string][] = [
  ["1", "0.64", "4.64"],
  ["2", "0.6794342400000009", "4.679434240000001"],
  ["3", "0.6794342400000009", "4.679434240000001"],
  ["4", "0.6794342400000009", "4.679434240000001"],
  ["5", "0.48", "4.48"],
  ["6", "0.49945600000000034", "4.499456"],
  ["7", "0.49945600000000034", "4.499456"],
  ["8", "0.49945600000000034", "4.499456"],
  ["9", "0.49945600000000034", "4.499456"],
  ["10", "0.49945600000000034", "4.499456"],
  ["11", "0.49945600000000034", "4.499456"],
  ["12", "0.49945600000000034", "4.499456"],
];

const cell = "h-[46.4px] whitespace-nowrap border-2 border-t-[#5f5f5f] border-l-[#5f5f5f] border-r-[#bdbdbd] border-b-[#bdbdbd] p-0 pb-[6px] pl-[1px] align-middle leading-none";

function Calculator() {
  return (
    <div className={`flex h-[1200px] flex-col items-center bg-white ${SERIF} text-black`}>
      <div className="flex h-[98px] w-[608px] shrink-0 justify-between bg-[#dfdfdf] pl-[32px] pr-[31px] font-['Roboto',sans-serif] text-[15px] leading-[26px] text-[#333]">
        <span className="scale-x-[0.77]">Borrower</span>
        <span className="scale-x-[0.77]">Lendor</span>
        <span className="scale-x-[0.77]">Borrower</span>
      </div>
      <div className="mt-[74px] flex flex-col">
        {[
          ["Principle:", "4"],
          ["Rate:", "4"],
          ["Period:", "3"],
        ].map(([label, val]) => (
          <div key={label} className="h-[57px] whitespace-nowrap text-center text-[47.5px] font-bold leading-[57px]">
            <span className="mr-[3px]">{label}</span>
            <input
              readOnly
              value={val}
              className="h-[40px] w-[280px] border-2 border-[#bdbdbd] bg-white pl-[6px] font-['Liberation_Sans',sans-serif] text-[22px] font-normal text-black outline-none"
            />
          </div>
        ))}
      </div>
      <div className="mt-[49px] flex h-[32px] items-center pl-[10px] text-[32px] leading-[32px]">
        <div className="h-[28px] w-[28px] rounded-full border-2 border-[#c4c4c4] bg-gradient-to-b from-white to-[#f2f2f2]" />
        <span className="-mt-[4px] ml-[12px]">Simple Interest</span>
        <div className="ml-[18px] flex h-[28px] w-[28px] items-center justify-center rounded-full bg-[#3f97f7]">
          <div className="h-[8px] w-[8px] rounded-full bg-white" />
        </div>
        <span className="-mt-[4px] ml-[12px]">Compound Interest</span>
      </div>
      <button className="mt-[44px] h-[33px] w-[152px] rounded-[8px] border-2 border-[#dcdcdc] bg-white font-['Liberation_Sans',sans-serif] text-[22.8px] leading-none text-black shadow-[0_1px_1px_rgba(0,0,0,0.15)]">
        Calculate
      </button>
      <table className="mt-[37px] w-[635px] table-fixed border-separate border-2 border-t-[#bdbdbd] border-l-[#bdbdbd] border-r-[#5f5f5f] border-b-[#5f5f5f] text-[32px] [border-spacing:4px]">
        <colgroup>
          <col className="w-[39px]" />
          <col className="w-[303px]" />
          <col />
        </colgroup>
        <thead>
          <tr>
            <th className={`${cell} text-center`}>#</th>
            <th className={`${cell} text-center`}>Interest</th>
            <th className={`${cell} text-center`}>Amount</th>
          </tr>
        </thead>
        <tbody>
          {rows.map(([n, interest, amount]) => (
            <tr key={n}>
              <td className={`${cell} ${n.length > 1 ? "text-center" : ""}`}>{n}</td>
              <td className={cell}>{interest}</td>
              <td className={`${cell} pl-[2px]`}>{amount}</td>
            </tr>
          ))}
        </tbody>
      </table>
    </div>
  );
}

function BehindWindow() {
  return (
    <div className="flex h-[51px] w-full items-stretch rounded-b-[10px] bg-gradient-to-r from-[#c6c6c6] via-[#8f8f8f] to-[#8f8f8f]">
      <div className="flex w-[208px] shrink-0 flex-col pl-[9px]">
        <div className="flex h-[36px] items-start overflow-hidden rounded-bl-[8px] border-b-2 border-l-2 border-[#747474] bg-gradient-to-b from-[#7f7f7f] to-[#a2a2a2] pt-[12px]">
          <div className="ml-[22px] h-[12px] w-[22px] border border-[#a8a8a8] bg-[#8f8f8f]" />
          <span className="-mt-[30px] ml-[27px] pt-[10px] text-[23px] leading-[28px] text-[#111]">Simple and</span>
        </div>
      </div>
      <div className="flex-1 rounded-bl-[12px] border-b-2 border-l-2 border-[#737373] bg-gradient-to-b from-[#6e6e6e] to-[#8c8c8c]">
        <div className="ml-[620px] h-full w-[2px] bg-[#7c7c7c]" />
      </div>
    </div>
  );
}

export default function App() {
  return (
    <div className="flex h-[1600px] w-[2560px] flex-col overflow-hidden bg-[#3b424a] font-['Liberation_Sans',sans-serif]">
      <MenuBar />
      <div className="relative z-10 -mb-[12px] h-[1429px] w-[2558px] shrink-0 overflow-hidden rounded-t-[10px] rounded-b-[12px] bg-[#fbfbfb]">
        <TabBar />
        <NavBar />
        <BookmarksBar />
        <div className="ml-[16px] mr-[14px] border-x-[10px] border-b-[10px] border-[#fdbfca]">
          <Calculator />
        </div>
      </div>
      <BehindWindow />
      <div className="h-[2px] bg-[#262626]" />
      <Dock />
    </div>
  );
}
